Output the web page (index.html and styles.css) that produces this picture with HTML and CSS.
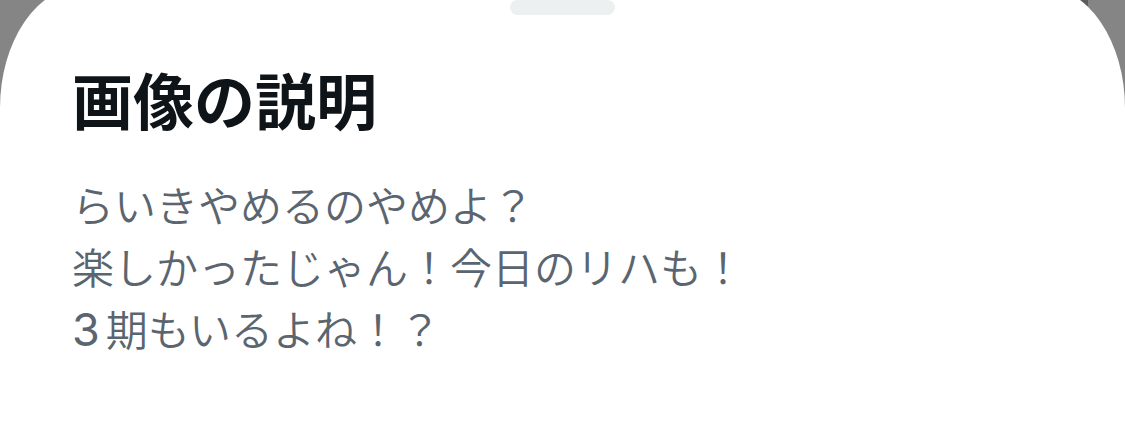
FILE: index.html
```html
<!DOCTYPE html>
<html lang="ja">
<head>
    <meta charset="UTF-8">
    <meta name="viewport" content="width=device-width, initial-scale=1">
    <title>画像の説明</title>
    <link rel="stylesheet" href="styles.css">
</head>
<body>
    <section class="sheet" aria-labelledby="sheet-title">
        <div class="handle"></div>
        <h1 class="title" id="sheet-title">画像の説明</h1>
        <p class="text">らいきやめるのやめよ？<br>楽しかったじゃん！今日のリハも！<br><span class="num">3</span>期もいるよね！？</p>
    </section>
</body>
</html>
```

FILE: styles.css
```css
* {
    margin: 0;
    padding: 0;
    box-sizing: border-box;
}
/* dimmed page, with a darker piece behind the right corner */
body {
    overflow: hidden;
    background: linear-gradient(#5c5c5c, #5c5c5c) right 37px top / 40px 20px no-repeat #858585;
    font-family: "Noto Sans CJK JP", sans-serif;
}
.sheet {
    min-height: calc(100vh + 14px);
    margin-top: -14px;
    padding: 14px 72px 64px;
    background: #fff;
    border-radius: 84px 84px 0 0 / 122px 122px 0 0;
}
.handle {
    width: 105px;
    height: 15px;
    margin: 0 auto;
    border-radius: 8px;
    background: #ecf0f1;
}
.title {
    margin-top: 38px;
    font-size: 61px;
    line-height: 92px;
    font-weight: 700;
    color: #0f1419;
}
.text {
    margin-top: 28px;
    font-size: 42px;
    line-height: 62px;
    font-weight: 350;
    color: #5a6570;
}
.num {
    margin-right: 6px;
    font-family: Inter, sans-serif;
    font-size: 45px;
    font-weight: 400;
    line-height: 1;
}
```
